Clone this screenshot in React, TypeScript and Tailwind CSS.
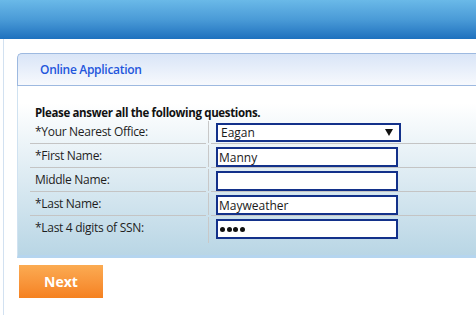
import React from "react";

type Row = { label: string; value?: string; kind: "select" | "text" | "password" };

const rows: Row[] = [
  { label: "*Your Nearest Office:", value: "Eagan", kind: "select" },
  { label: "*First Name:", value: "Manny", kind: "text" },
  { label: "Middle Name:", value: "", kind: "text" },
  { label: "*Last Name:", value: "Mayweather", kind: "text" },
  { label: "*Last 4 digits of SSN:", value: "1234", kind: "password" },
];

const FormRow: React.FC<{ row: Row; last: boolean }> = ({ row, last }) => {
  const line = last ? "" : "border-b border-[#c4c4c4]";
  return (
    <div className="flex h-[24px]">
      <div className={`w-[176px] shrink-0 pl-[5px] flex items-center text-[12px] tracking-[-0.3px] text-[#1e1e1e] ${line}`}>
        {row.label}
      </div>
      <div className="w-[2px] shrink-0" />
      <div className={`w-px shrink-0 bg-[#c8c8c8] ${last ? "mt-[1px] h-[26px]" : "my-[1px]"}`} />
      <div className="w-[2px] shrink-0" />
      <div className={`flex-1 pl-[5px] pt-[3px] ${line}`}>
        {row.kind === "select" ? (
          <div className="w-[185px] h-[19px] border-2 border-[#13318a] bg-white flex items-center justify-between pl-[3px] pr-[6px] text-[12px] text-[#1a1a1a]">
            <span>{row.value}</span>
            <svg width="8" height="7" viewBox="0 0 8 7">
              <path d="M0 0h8L4 7z" fill="#111" />
            </svg>
          </div>
        ) : row.kind === "password" ? (
          <div className="w-[182px] h-[20px] border-2 border-[#13318a] bg-white pl-[2px] flex items-center gap-[1.5px]">
            {[0, 1, 2, 3].map((d) => (
              <span key={d} className="w-[5px] h-[5px] rounded-full bg-[#111]" />
            ))}
          </div>
        ) : (
          <input
            readOnly
            type="text"
            value={row.value}
            className="block w-[182px] h-[20px] border-2 border-[#13318a] bg-white px-[1px] text-[12px] text-[#1a1a1a] outline-none"
          />
        )}
      </div>
    </div>
  );
};

export default function App() {
  return (
    <div className="w-[476px] h-[315px] overflow-hidden bg-white font-['Open_Sans',sans-serif]">
      <div className="h-[39px] bg-gradient-to-b from-[#6ab9e8] via-[#4a9bd7] to-[#1d71be]" />
      <div className="ml-[3px] h-[276px] border-l border-[#d2e1f1] pl-[13px] pt-[14px]">
        {/* panel */}
        <div className="w-[480px]">
          <div className="h-[33px] rounded-tl-[5px] border border-r-0 border-[#9db9e0] bg-gradient-to-b from-[#d9e5f7] to-[#f7f9fd] pl-[22px] flex items-center">
            <span className="text-[12px] font-semibold tracking-[-0.3px] text-[#2356dc]">Online Application</span>
          </div>
          <div className="border-l border-[#d0e2f1] border-b-[3px] border-b-[#b5d5ef] bg-gradient-to-b from-white from-[10%] to-[#b9d6e5] pt-[20px] pb-[15px]">
            <div className="pl-[17px] h-[14px] leading-[14px] text-[11.5px] font-bold tracking-[-0.35px] text-[#111]">
              Please answer all the following questions.
            </div>
            <div className="ml-[12px]">
              {rows.map((r, i) => (
                <FormRow key={r.label} row={r} last={i === rows.length - 1} />
              ))}
            </div>
          </div>
        </div>
        <button className="mt-[7px] ml-[2px] block w-[84px] h-[33px] bg-gradient-to-b from-[#fbab52] to-[#f5811f] text-white text-[14px] font-bold">
          Next
        </button>
      </div>
    </div>
  );
}
